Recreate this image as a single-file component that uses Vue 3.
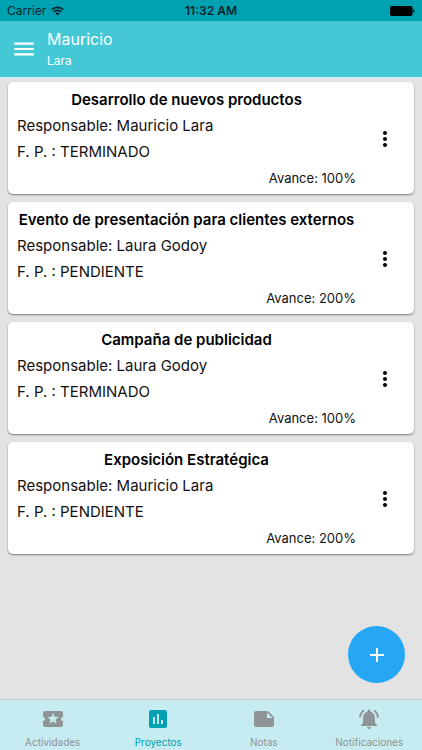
<template>
  <div class="screen">
    <!-- Barra de estado -->
    <div class="status-bar">
      <div class="status-left">
        <span>Carrier</span>
        <svg class="wifi" viewBox="0 0 13 10" fill="none" stroke="#05252a" stroke-width="1.7">
          <path d="M0.8 3.6a8.2 8.2 0 0 1 11.4 0" />
          <path d="M2.8 5.9a5.3 5.3 0 0 1 7.4 0" />
          <path d="M6.5 9.6 4.5 7.5a3 3 0 0 1 4 0z" fill="#05252a" stroke="none" />
        </svg>
      </div>
      <span class="status-time">11:32 AM</span>
      <div class="status-right">
        <svg class="battery" viewBox="0 0 25 10">
          <rect x="0" y="0" width="22.5" height="10" rx="1.8" />
          <path d="M23.2 3.3c1.8.4 1.8 3 0 3.4z" />
        </svg>
      </div>
    </div>

    <!-- Encabezado -->
    <header class="header">
      <button class="menu-btn" type="button" aria-label="Menú">
        <svg viewBox="0 0 24 24" fill="currentColor">
          <path d="M3 18h18v-2H3v2zm0-5h18v-2H3v2zm0-7v2h18V6H3z" />
        </svg>
      </button>
      <div>
        <h1 class="user-name">{{ user.name }}</h1>
        <p class="user-lastname">{{ user.lastname }}</p>
      </div>
    </header>

    <!-- Lista de proyectos -->
    <main class="content">
      <article v-for="project in projects" :key="project.title" class="card">
        <div class="card-body">
          <h2 class="card-title">{{ project.title }}</h2>
          <p class="card-text">Responsable: {{ project.owner }}</p>
          <p class="card-text">F. P. : {{ project.status }}</p>
          <p class="card-progress">Avance: {{ project.progress }}%</p>
        </div>
        <button class="card-menu" type="button" aria-label="Opciones">
          <svg viewBox="0 0 24 24" fill="currentColor">
            <path d="M12 8c1.1 0 2-.9 2-2s-.9-2-2-2-2 .9-2 2 .9 2 2 2zm0 2c-1.1 0-2 .9-2 2s.9 2 2 2 2-.9 2-2-.9-2-2-2zm0 6c-1.1 0-2 .9-2 2s.9 2 2 2 2-.9 2-2-.9-2-2-2z" />
          </svg>
        </button>
      </article>
    </main>

    <button class="fab" type="button" aria-label="Agregar">
      <svg viewBox="0 0 24 24" fill="currentColor">
        <path d="M19 13h-6v6h-2v-6H5v-2h6V5h2v6h6v2z" />
      </svg>
    </button>

    <!-- Pestañas -->
    <nav class="tabs">
      <a
        v-for="tab in tabs"
        :key="tab.label"
        href="#"
        class="tab"
        :class="{ active: tab.label === activeTab }"
        @click.prevent="activeTab = tab.label"
      >
        <svg viewBox="0 0 24 24" fill="currentColor">
          <path :d="tab.icon" />
        </svg>
        <span>{{ tab.label }}</span>
      </a>
    </nav>
  </div>
</template>

<script setup>
import { ref } from 'vue'

const user = { name: 'Mauricio', lastname: 'Lara' }

const projects = ref([
  { title: 'Desarrollo de nuevos productos', owner: 'Mauricio Lara', status: 'TERMINADO', progress: 100 },
  { title: 'Evento de presentación para clientes externos', owner: 'Laura Godoy', status: 'PENDIENTE', progress: 200 },
  { title: 'Campaña de publicidad', owner: 'Laura Godoy', status: 'TERMINADO', progress: 100 },
  { title: 'Exposición Estratégica', owner: 'Mauricio Lara', status: 'PENDIENTE', progress: 200 }
])

const activeTab = ref('Proyectos')

const tabs = [
  {
    label: 'Actividades',
    icon: 'M20 12c0-1.1.9-2 2-2V6c0-1.1-.9-2-2-2H4c-1.1 0-1.99.9-1.99 2v4c1.1 0 1.99.9 1.99 2s-.89 2-2 2v4c0 1.1.9 2 2 2h16c1.1 0 2-.9 2-2v-4c-1.1 0-2-.9-2-2zm-4.42 4.8L12 14.5l-3.58 2.3 1.08-4.12-3.29-2.69 4.24-.25L12 5.8l1.54 3.95 4.24.25-3.29 2.69 1.09 4.11z'
  },
  {
    label: 'Proyectos',
    icon: 'M19 3H5c-1.1 0-2 .9-2 2v14c0 1.1.9 2 2 2h14c1.1 0 2-.9 2-2V5c0-1.1-.9-2-2-2zM9 17H7v-7h2v7zm4 0h-2V7h2v10zm4 0h-2v-4h2v4z'
  },
  {
    label: 'Notas',
    icon: 'M4 4c-1.1 0-2 .9-2 2v12.01c0 1.1.9 1.99 2 1.99h16c1.1 0 2-.9 2-2v-8l-6-6H4zm11 1.5 5.5 5.5H15V5.5z'
  },
  {
    label: 'Notificaciones',
    icon: 'M7.58 4.08 6.15 2.65C3.75 4.48 2.17 7.3 2.03 10.5h2c.15-2.65 1.51-4.97 3.55-6.42zM19.97 10.5h2c-.15-3.2-1.73-6.02-4.12-7.85l-1.42 1.43c2.02 1.45 3.39 3.77 3.54 6.42zM18 11c0-3.07-1.64-5.64-4.5-6.32V4c0-.83-.67-1.5-1.5-1.5s-1.5.67-1.5 1.5v.68C7.63 5.36 6 7.92 6 11v5l-2 2v1h16v-1l-2-2v-5zM12 22c.14 0 .27-.01.4-.04.65-.14 1.18-.58 1.44-1.18.1-.24.15-.5.15-.78h-4c.01 1.1.9 2 2.01 2z'
  }
]
</script>

<style>
body {
  margin: 0;
  background: #e3e3e3;
}
</style>

<style scoped>
.screen {
  position: relative;
  display: flex;
  flex-direction: column;
  min-height: 100vh;
  background: #e3e3e3;
  color: #111;
  font-family: Inter, Roboto, sans-serif;
}

h1,
h2,
p {
  margin: 0;
  font-weight: 400;
}

button {
  padding: 0;
  border: none;
  background: none;
  cursor: pointer;
}

svg {
  display: block;
}

/* Barra de estado */
.status-bar {
  display: flex;
  align-items: center;
  height: 21px;
  padding: 0 7px;
  background: #00a1b1;
  color: #05252a;
  font-size: 12px;
}

.status-left,
.status-right {
  display: flex;
  flex: 1;
  align-items: center;
  gap: 5px;
}

.status-right {
  justify-content: flex-end;
}

.status-time {
  font-weight: 600;
}

.wifi {
  width: 13px;
  height: 10px;
}

.battery {
  width: 25px;
  height: 10px;
  fill: #000;
}

/* Encabezado */
.header {
  display: flex;
  align-items: center;
  gap: 10px;
  height: 56px;
  padding: 0 11px;
  border-bottom: 1px solid #d3ecef;
  background: #45c8d6;
  color: #fff;
}

.menu-btn {
  color: #fff;
}

.menu-btn svg {
  width: 26px;
  height: 26px;
}

.user-name {
  font-size: 16px;
  line-height: 24px;
}

.user-lastname {
  font-size: 12px;
  line-height: 20px;
}

/* Tarjetas */
.content {
  display: flex;
  flex: 1;
  flex-direction: column;
  gap: 8px;
  padding: 4px 8px;
}

.card {
  display: flex;
  padding: 5px 0 3px;
  border-radius: 5px;
  background: #fff;
  box-shadow: 0 1px 2px rgba(0, 0, 0, 0.45);
}

.card-body {
  flex: 1;
  padding-left: 9px;
  font-size: 15px;
  line-height: 26px;
}

.card-title {
  color: #000;
  font-size: 15px;
  font-weight: 600;
  text-align: center;
}

.card-progress {
  font-size: 13px;
  text-align: right;
}

.card-menu {
  display: flex;
  align-items: center;
  justify-content: center;
  width: 58px;
  color: #000;
}

.card-menu svg {
  width: 24px;
  height: 24px;
}

/* Botón flotante */
.fab {
  position: fixed;
  right: 17px;
  bottom: 67px;
  display: flex;
  align-items: center;
  justify-content: center;
  width: 57px;
  height: 57px;
  border-radius: 50%;
  background: #25a7f5;
  color: #fff;
}

.fab svg {
  width: 24px;
  height: 24px;
}

/* Pestañas */
.tabs {
  position: sticky;
  bottom: 0;
  display: flex;
  border-top: 1px solid #b9c9cd;
  background: #c6ebf0;
}

.tab {
  display: flex;
  flex: 1 1 0;
  flex-direction: column;
  align-items: center;
  gap: 4px;
  padding: 7px 0 1px;
  color: #8f9496;
  font-size: 10px;
  line-height: 14px;
  text-decoration: none;
}

.tab svg {
  width: 24px;
  height: 24px;
}

.tab.active {
  color: #00a1b1;
}
</style>
